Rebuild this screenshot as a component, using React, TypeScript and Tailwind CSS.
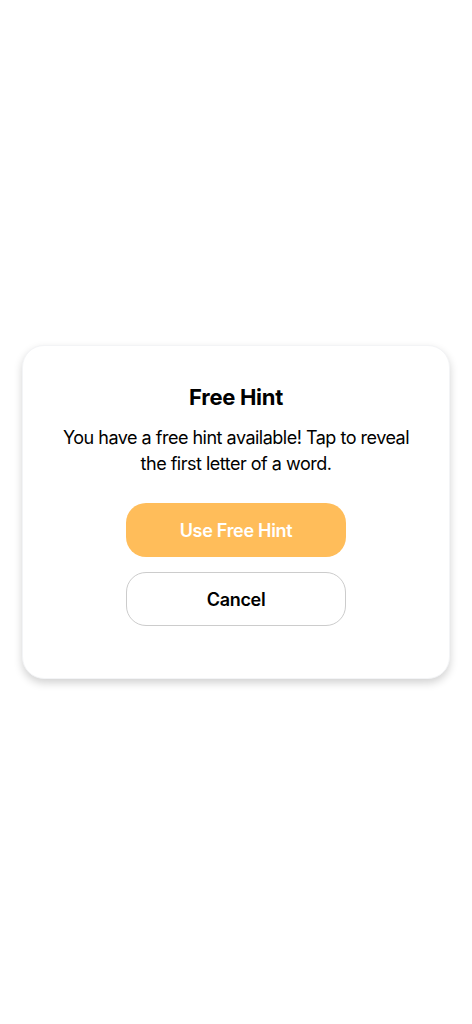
export default function App() {
  return (
    <div className="min-h-screen bg-white flex items-center justify-center px-[22px]" style={{ fontFamily: 'Inter, "Noto Sans", sans-serif' }}>
      {/* Hint dialog */}
      <div className="w-full bg-white rounded-[22px] border border-gray-100 shadow-[0_4px_8px_rgba(0,0,0,0.18)] px-8 pt-[37px] pb-[52px] flex flex-col items-center">
        <h2 className="text-[22px] leading-[28px] font-bold text-black tracking-[-0.3px]">Free Hint</h2>
        <p className="mt-[14px] text-[18px] leading-[26px] text-black text-center tracking-[-0.5px]">
          You have a free hint available! Tap to reveal the first letter of a word.
        </p>
        <button className="mt-[26px] w-[220px] h-[54px] rounded-[20px] bg-[#ffbd5a] text-white text-[18px] font-semibold tracking-[-0.3px]">
          Use Free Hint
        </button>
        <button className="mt-[15px] w-[220px] h-[54px] rounded-[20px] border border-[#cccccc] bg-white text-black text-[18px] font-semibold tracking-[-0.3px]">
          Cancel
        </button>
      </div>
    </div>
  )
}
